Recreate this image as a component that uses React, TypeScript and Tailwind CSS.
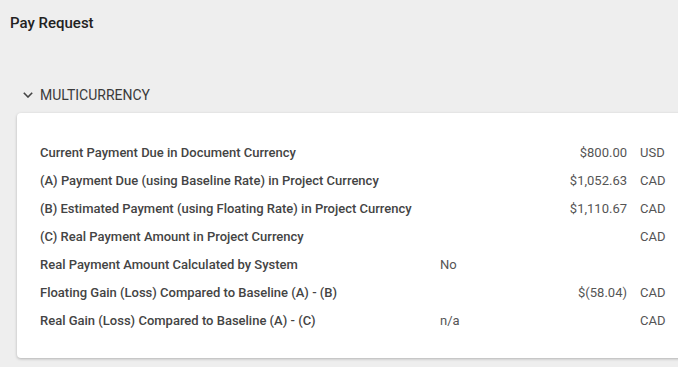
import React from "react";

const rows: { label: string; mid?: string; amount?: string; cur?: string }[] = [
  { label: "Current Payment Due in Document Currency", amount: "$800.00", cur: "USD" },
  { label: "(A) Payment Due (using Baseline Rate) in Project Currency", amount: "$1,052.63", cur: "CAD" },
  { label: "(B) Estimated Payment (using Floating Rate) in Project Currency", amount: "$1,110.67", cur: "CAD" },
  { label: "(C) Real Payment Amount in Project Currency", cur: "CAD" },
  { label: "Real Payment Amount Calculated by System", mid: "No" },
  { label: "Floating Gain (Loss) Compared to Baseline (A) - (B)", amount: "$(58.04)", cur: "CAD" },
  { label: "Real Gain (Loss) Compared to Baseline (A) - (C)", mid: "n/a", cur: "CAD" },
];

export default function App() {
  return (
    <div
      className="w-[678px] h-[367px] overflow-hidden bg-[#eeeeee] text-[#333]"
      style={{ fontFamily: "Roboto, 'Liberation Sans', sans-serif" }}
    >
      <div className="pl-[10px] pt-[14px] text-[15px] font-medium leading-[18px] text-[#222]">Pay Request</div>
      <div className="flex items-center pl-[23px] mt-[54px] h-[18px] gap-[7px]">
        <svg width="10" height="6" viewBox="0 0 10 6" className="shrink-0">
          <path d="M0.8 0.8 L5 5 L9.2 0.8" fill="none" stroke="#444" strokeWidth="1.6" />
        </svg>
        <span className="text-[14px] text-[#3a3a3a] leading-[18px]">MULTICURRENCY</span>
      </div>
      <div className="ml-[17px] mr-[-20px] mt-[9px] h-[245px] bg-white rounded-[4px] shadow-[0_1px_3px_rgba(0,0,0,0.25)] pt-[26px] pl-[23px]">
        {rows.map((r, i) => (
          <div key={i} className="flex items-center h-[28px] text-[13px] leading-[16px]">
            <div className="w-[400px] font-medium text-[#444]">{r.label}</div>
            <div className="w-[100px] text-[#555]">{r.mid ?? ""}</div>
            <div className="w-[87px] text-right text-[#555]">{r.amount ?? ""}</div>
            <div className="pl-[13px] text-[#555]">{r.cur ?? ""}</div>
          </div>
        ))}
      </div>
    </div>
  );
}
